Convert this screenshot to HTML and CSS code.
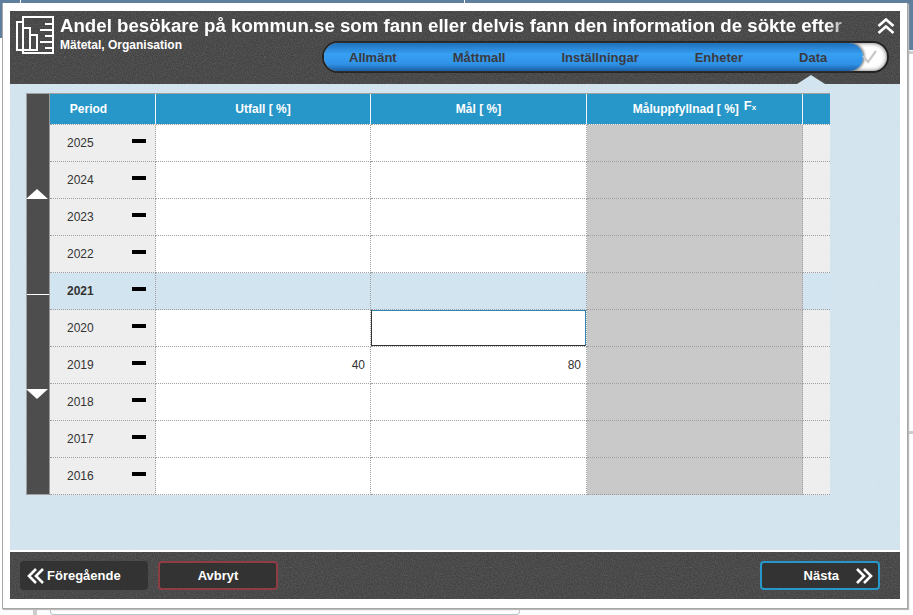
FILE: index.html
```html
<!DOCTYPE html>
<html lang="sv">
<head>
<meta charset="utf-8">
<title>Andel besökare</title>
<link rel="stylesheet" href="styles.css">
</head>
<body>
<div class="backdrop">
  <span class="bd-line bd-v1"></span><span class="bd-line bd-v2"></span>
  <span class="bd-h bd-h1"></span><span class="bd-h bd-h2"></span>
  <span class="bd-stub"></span>
  <span class="bd-card"></span>
</div>
<div class="dialog">
  <header class="head">
    <div class="head-top">
      <svg class="logo" width="38" height="38" viewBox="0 0 38 38" fill="none" stroke="#fff" stroke-width="2">
        <path d="M7 6V1H37V37H7V34"/>
        <rect x="1" y="6" width="6" height="28"/>
        <rect x="7" y="12" width="7" height="22"/>
        <rect x="14" y="19" width="7" height="15"/>
        <path d="M1 34H21M29 8H37M24 14H37M29 20H37M24 26H37M29 32H37"/>
      </svg>
      <div class="titles">
        <h1 class="title">Andel besökare på kommun.se som fann eller delvis fann den information de sökte efter</h1>
        <div class="sub">Mätetal, Organisation</div>
      </div>
      <svg class="collapse" width="18" height="16" viewBox="0 0 18 16" fill="none" stroke="#fff" stroke-width="2.6">
        <path d="M1.5 8L9 1.5L16.5 8M1.5 15L9 8.5L16.5 15"/>
      </svg>
    </div>
    <nav class="nav">
      <div class="pill">
        <span class="tab">Allmänt</span>
        <span class="tab">Måttmall</span>
        <span class="tab">Inställningar</span>
        <span class="tab">Enheter</span>
        <span class="tab">Data</span>
      </div>
      <svg class="check" width="15" height="14" viewBox="0 0 15 14" fill="none" stroke="#c8c8c8" stroke-width="2.2"><path d="M1 6L6 12L14 1"/></svg>
      <span class="caret"></span>
    </nav>
  </header>
  <main class="body">
    <div class="table">
      <div class="scroller">
        <div class="scroll-half"><span class="arrow-up"></span></div>
        <div class="scroll-half"><span class="arrow-down"></span></div>
      </div>
      <div class="grid">
        <div class="hc hc-period">Period</div>
        <div class="hc">Utfall [ %]</div>
        <div class="hc">Mål [ %]</div>
        <div class="hc">Måluppfyllnad [ %]<span class="fx">F<small>x</small></span></div>
        <div class="hc hc-end"></div>

        <div class="c per"><span>2025</span><i></i></div><div class="c"></div><div class="c"></div><div class="c grey"></div><div class="c end"></div>
        <div class="c per"><span>2024</span><i></i></div><div class="c"></div><div class="c"></div><div class="c grey"></div><div class="c end"></div>
        <div class="c per"><span>2023</span><i></i></div><div class="c"></div><div class="c"></div><div class="c grey"></div><div class="c end"></div>
        <div class="c per"><span>2022</span><i></i></div><div class="c"></div><div class="c"></div><div class="c grey"></div><div class="c end"></div>
        <div class="c per sel"><span>2021</span><i></i></div><div class="c sel"></div><div class="c sel"></div><div class="c grey"></div><div class="c sel"></div>
        <div class="c per"><span>2020</span><i></i></div><div class="c"></div><div class="c focus"><div class="input"></div></div><div class="c grey"></div><div class="c end"></div>
        <div class="c per"><span>2019</span><i></i></div><div class="c num">40</div><div class="c num">80</div><div class="c grey"></div><div class="c end"></div>
        <div class="c per"><span>2018</span><i></i></div><div class="c"></div><div class="c"></div><div class="c grey"></div><div class="c end"></div>
        <div class="c per"><span>2017</span><i></i></div><div class="c"></div><div class="c"></div><div class="c grey"></div><div class="c end"></div>
        <div class="c per"><span>2016</span><i></i></div><div class="c"></div><div class="c"></div><div class="c grey"></div><div class="c end"></div>
      </div>
    </div>
  </main>
  <footer class="foot">
    <button class="btn btn-prev"><svg width="18" height="16" viewBox="0 0 18 16" fill="none" stroke="#fff" stroke-width="2.6"><path d="M9 1L2 8L9 15M16 1L9 8L16 15"/></svg>Föregående</button>
    <button class="btn btn-cancel">Avbryt</button>
    <button class="btn btn-next">Nästa<svg width="18" height="16" viewBox="0 0 18 16" fill="none" stroke="#fff" stroke-width="2.6"><path d="M2 1L9 8L2 15M9 1L16 8L9 15"/></svg></button>
  </footer>
</div>
</body>
</html>
```
FILE: styles.css
```css
* { box-sizing: border-box; }
html, body { margin: 0; height: 100%; }
body {
  width: 913px; height: 615px; overflow: hidden; position: relative;
  background: #fff; font-family: "Liberation Sans", Arial, sans-serif; color: #333;
  padding: 3px 0 0 2px;
}
.backdrop { position: absolute; inset: 0; }
.backdrop::before { content: ""; position: absolute; left: 0; right: 0; top: 0; height: 38px; background: #5f7f9c; }
.backdrop::after { content: ""; position: absolute; right: 0; width: 6px; top: 38px; height: 12px; background: #5f7f9c; }
.bd-line { position: absolute; top: 0; width: 1px; height: 3px; background: #fff; }
.bd-v1 { left: 20px; } .bd-v2 { left: 464px; }
.bd-h { position: absolute; right: 0; width: 6px; height: 3px; background: #ccc; }
.bd-h1 { top: 51px; } .bd-h2 { top: 431px; }
.bd-stub { position: absolute; left: 33px; bottom: 0; width: 4px; height: 6px; background: #ccc; }
.bd-card { position: absolute; left: 50px; bottom: 0; width: 470px; height: 6px; border: 1px solid #b9c4cc; border-top: 0; border-radius: 0 0 4px 4px; background: #fff; }

.dialog {
  position: relative; width: 906px; height: 606px; background: #fff;
  border: 1px solid #a6a6a6; border-top: 0;
  box-shadow: 1px 1px 1px #bbb;
  padding: 8px 7px;
  display: flex; flex-direction: column;
}
.head, .foot {
  background-color: #444;
  background-image: url("data:image/svg+xml,%3Csvg xmlns='http://www.w3.org/2000/svg' width='200' height='200'%3E%3Cfilter id='n'%3E%3CfeTurbulence type='fractalNoise' baseFrequency='.9' numOctaves='2'/%3E%3CfeColorMatrix values='0 0 0 0 1 0 0 0 0 1 0 0 0 0 1 .25 0 0 0 -.09'/%3E%3C/filter%3E%3Crect width='200' height='200' filter='url(%23n)'/%3E%3C/svg%3E");
}
.head {
  height: 73px; flex: none; position: relative;
  padding: 5px 0 0 6px;
}
.head-top { display: flex; align-items: flex-start; }
.logo { flex: none; margin: 0 6px 0 0; }
.titles { flex: 1; min-width: 0; }
.title {
  margin: 0; font-size: 18.67px; line-height: 20px; font-weight: bold; color: #fff; white-space: nowrap;
  width: 782px;
  -webkit-mask-image: linear-gradient(90deg, #000 98%, rgba(0,0,0,.55) 100%);
  mask-image: linear-gradient(90deg, #000 98%, rgba(0,0,0,.55) 100%);
}
.sub { font-size: 12px; line-height: 14px; font-weight: bold; color: #fff; margin-top: 2px; }
.collapse { flex: none; margin: 2px 5px 0 0; }
.nav {
  position: absolute; right: 11px; top: 30px; width: 567px; height: 32px;
  border-radius: 16px; background: #fff; border: 2px solid #222;
  box-shadow: inset 0 0 4px #666;
}
.pill {
  position: absolute; left: 0; top: 0; bottom: 0; width: 539px; border-radius: 14px;
  background: linear-gradient(#1f6fbb, #37a0f3 40%, #2f92e8 75%, #1c5fa3);
  box-shadow: 1px 0 3px #444;
  display: flex; align-items: center; gap: 56px; padding-left: 25px;
}
.tab { font-size: 13px; font-weight: bold; color: #3a3a3f; }
.check { position: absolute; right: 10px; top: 7px; }
.caret { position: absolute; right: 62px; top: 32px; width: 0; height: 0; border: 14px solid transparent; border-top: 0; border-bottom: 9px solid #d2e4ef; }

.body {
  height: 466px; flex: none; background-color: #d4e5f0; padding: 9px 0 0 16px;
  background-image: url("data:image/svg+xml,%3Csvg xmlns='http://www.w3.org/2000/svg' width='200' height='200'%3E%3Cfilter id='n'%3E%3CfeTurbulence type='fractalNoise' baseFrequency='.5' numOctaves='2'/%3E%3CfeColorMatrix values='0 0 0 0 .6 0 0 0 0 .7 0 0 0 0 .8 .5 0 0 0 -.16'/%3E%3C/filter%3E%3Crect width='200' height='200' filter='url(%23n)'/%3E%3C/svg%3E");
}
.table { display: flex; width: 804px; height: 402px; border: 1px solid #a0a0a0; background: #eee; }
.scroller { width: 23px; flex: none; background: #4d4d4d; border-right: 1px solid #999; display: flex; flex-direction: column; }
.scroll-half { height: 200px; display: flex; align-items: center; justify-content: flex-start; }
.scroll-half:first-child { border-bottom: 1px solid #fff; height: 201px; }
.arrow-up { width: 0; height: 0; border: 11px solid transparent; border-top: 0; border-bottom: 10px solid #fff; margin-left: -1px; }
.arrow-down { width: 0; height: 0; border: 11px solid transparent; border-bottom: 0; border-top: 10px solid #fff; margin-left: -1px; }
.grid {
  flex: 1; display: grid;
  grid-template-columns: 106px 215px 216px 216px 27px;
  grid-template-rows: 31px repeat(10, 37px);
}
.hc {
  background: #2796c8; background-clip: padding-box; color: #fff; font-size: 12px; font-weight: bold;
  display: flex; align-items: center; justify-content: center;
  border-right: 1px dotted #fff; border-bottom: 1px dotted #a0a0a0; padding-bottom: 1px;
}
.hc-period { padding-right: 28px; }
.hc-end { border-right: 0; }
.fx { font-size: 13px; line-height: 12px; margin-left: 5px; margin-top: -3px; }
.fx small { font-size: 8px; }
.c { background: #fff; border-right: 1px dotted #a0a0a0; border-bottom: 1px dotted #a0a0a0; font-size: 12px; color: #333; }
.c:nth-child(5n) { border-right: 0; }
.per { background: #eee; display: flex; padding-left: 17px; padding-top: 11px; position: relative; }
.per i { position: absolute; left: 82px; top: 14px; width: 14px; height: 4px; background: #000; }
.grey { background: #c9c9c9; }
.end { background: #eee; }
.sel { background: #d2e4ef; }
.per.sel span { font-weight: bold; }
.num { text-align: right; padding: 11px 5px 0 0; }
.focus { padding: 0; }
.input { height: 100%; border: 1px solid #2c86ad; border-bottom-color: #333; border-left-color: #333; background: #fff; }

.foot {
  height: 47px; margin-top: 2px; flex: none;
  display: flex; align-items: center; padding: 0 20px 0 10px;
}
.btn {
  height: 29px; border-radius: 4px; background: #333; color: #fff; font: bold 13px "Liberation Sans", Arial, sans-serif;
  display: flex; align-items: center; justify-content: center; padding: 0; border: 2px solid #333;
}
.btn-prev { width: 128px; gap: 2px; justify-content: flex-start; padding-left: 5px; }
.btn-cancel { width: 120px; margin-left: 10px; border-color: #8f3d44; }
.btn-next { width: 120px; margin-left: auto; border-color: #2796c8; justify-content: flex-end; gap: 16px; padding-right: 5px; }
```
